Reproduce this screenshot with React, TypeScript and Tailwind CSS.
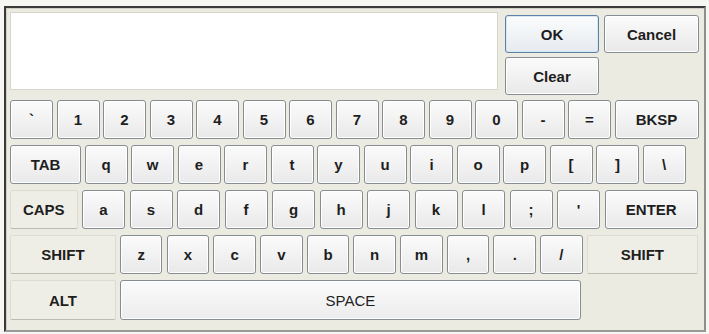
import React from "react";

const keyBase =
  "flex items-center justify-center h-full rounded-[3px] border border-[#858d93] bg-gradient-to-b from-[#fbfbfb] to-[#e9e9e9] shadow-[inset_0_0_0_1px_#ffffff] text-[#1e1e1e] font-bold text-[15px] leading-none";
const modBase =
  "flex items-center justify-center h-full rounded-[2px] border border-[#dcdbd2] border-b-[#bdbcb2] bg-[#efeee6] text-[#1e1e1e] font-bold text-[15px] leading-none";

function Key({ label, w, mod }: { label: string; w: string; mod?: boolean }) {
  return <div className={`${mod ? modBase : keyBase} ${w}`}>{label}</div>;
}

export default function App() {
  const row1 = ["`", "1", "2", "3", "4", "5", "6", "7", "8", "9", "0", "-", "="];
  const row2 = ["q", "w", "e", "r", "t", "y", "u", "i", "o", "p", "[", "]", "\\"];
  const row3 = ["a", "s", "d", "f", "g", "h", "j", "k", "l", ";", "'"];
  const row4 = ["z", "x", "c", "v", "b", "n", "m", ",", ".", "/"];
  return (
    <div
      className="w-[709px] h-[334px] bg-[#f6f6f2] pt-[6px] pl-[4px]"
      style={{ fontFamily: '"Liberation Sans", Arial, sans-serif' }}
    >
      <div className="w-[702px] h-[326px] border-2 border-t-[#3a3a3a] border-l-[#3a3a3a] border-r-[#8f8f8f] border-b-[#9a9a9a] bg-[#ecebe1] shadow-[inset_1px_1px_0_#cfcfc6] pl-[4px] pt-[4px] flex flex-col">
        <div className="flex h-[83px]">
          <div className="w-[488px] h-[78px] bg-white border border-[#d6d6cc]" />
          <div className="ml-[7px] mt-[3px] flex flex-col gap-[4px]">
            <div className="flex gap-[5px] h-[38px]">
              <div className="flex items-center justify-center w-[94px] h-full rounded-[3px] border border-[#5c82a8] bg-gradient-to-b from-[#fbfcfd] to-[#e6ebef] shadow-[inset_0_0_0_1px_#d6e6f3] text-[#1e1e1e] font-bold text-[15px] leading-none">
                OK
              </div>
              <Key label="Cancel" w="w-[95px]" />
            </div>
            <div className="flex h-[38px]">
              <Key label="Clear" w="w-[94px]" />
            </div>
          </div>
        </div>
        <div className="mt-[5px] flex flex-col gap-[6px]">
          <div className="flex gap-[3.5px] h-[39px]">
            {row1.map((k) => (
              <Key key={k} label={k} w="w-[43px]" />
            ))}
            <Key label="BKSP" w="w-[84px]" />
          </div>
          <div className="flex gap-[3.5px] h-[39px]">
            <Key label="TAB" w="w-[71px]" />
            {row2.map((k) => (
              <Key key={k} label={k} w="w-[43px]" />
            ))}
          </div>
          <div className="flex gap-[4.5px] h-[39px]">
            <Key label="CAPS" w="w-[67.5px]" mod />
            {row3.map((k) => (
              <Key key={k} label={k} w="w-[43px]" />
            ))}
            <Key label="ENTER" w="w-[93.5px]" />
          </div>
          <div className="flex gap-[4.2px] h-[39px]">
            <Key label="SHIFT" w="w-[105.8px]" mod />
            {row4.map((k) => (
              <Key key={k} label={k} w="w-[42.5px]" />
            ))}
            <Key label="SHIFT" w="w-[111px]" mod />
          </div>
          <div className="flex gap-[4.2px] h-[40px]">
            <Key label="ALT" w="w-[105.8px]" mod />
            <div className="flex items-center justify-center w-[461px] h-full rounded-[3px] border border-[#858d93] bg-gradient-to-b from-[#fbfbfb] to-[#ececec] shadow-[inset_0_0_0_1px_#ffffff] text-[#1e1e1e] font-normal text-[15px] leading-none">
              SPACE
            </div>
          </div>
        </div>
      </div>
    </div>
  );
}
